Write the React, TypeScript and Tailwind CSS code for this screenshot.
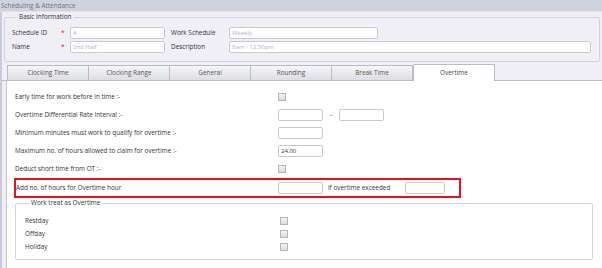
import React from "react";

const tabs = ["Clocking Time", "Clocking Range", "General", "Rounding", "Break Time", "Overtime"];

function Box({ w, value, placeholder }: { w: string; value?: string; placeholder?: string }) {
  return (
    <input
      readOnly
      value={value ?? ""}
      placeholder={placeholder}
      className={`${w} h-[12px] shrink-0 border border-[#c9c9cf] rounded-[2px] bg-white px-[2px] text-[6px] text-[#333] outline-none placeholder:text-[#b4b4bc]`}
    />
  );
}

function Check() {
  return (
    <span className="block w-[8px] h-[8px] shrink-0 border border-[#b4b4ba] bg-gradient-to-b from-[#f4f4f6] to-[#dcdce0]" />
  );
}

export default function App() {
  // rows under the Overtime tab
  const rows: { label: string; right: React.ReactNode }[] = [
    { label: "Early time for work before in time :-", right: <Check /> },
    {
      label: "Overtime Differential Rate Interval :-",
      right: (
        <div className="flex items-center">
          <Box w="w-[45px]" />
          <span className="w-[16px] text-center">-</span>
          <Box w="w-[45px]" />
        </div>
      ),
    },
    { label: "Minimum minutes must work to qualify for overtime :-", right: <Box w="w-[45px]" /> },
    { label: "Maximum no. of hours allowed to claim for overtime :-", right: <Box w="w-[45px]" value="24.00" /> },
    { label: "Deduct short time from OT :-", right: <Check /> },
  ];

  return (
    <div className="w-[602px] h-[268px] overflow-hidden bg-[#efeff5] font-['Open_Sans',sans-serif] text-[6.4px] text-[#333] flex flex-col">
      {/* title bar */}
      <div className="h-[12px] shrink-0 bg-[#ced3de] border-b border-[#dfe0e8] pl-[1px] leading-[11px] text-[#6f7184]">
        Scheduling &amp; Attendance
      </div>

      <div className="flex-1 flex flex-col border-l-2 border-[#c9cadb] min-h-0">
        {/* basic info */}
        <fieldset className="mx-[2px] mt-[1px] border border-[#d2d2db] rounded-[2px] pl-[7px] pt-[6px] pb-[8px]">
          <legend className="ml-[5px] px-[2px] leading-[8px] text-[#333]">Basic Information</legend>
          <div className="flex flex-col gap-[2px]">
            <div className="flex items-center h-[12px]">
              <span className="w-[49px]">Schedule ID</span>
              <span className="w-[9px] text-[#e0202a]">*</span>
              <Box w="w-[95px]" placeholder="4" />
              <span className="w-[58px] ml-[6px]">Work Schedule</span>
              <Box w="w-[149px]" placeholder="Weekly" />
            </div>
            <div className="flex items-center h-[12px]">
              <span className="w-[49px]">Name</span>
              <span className="w-[9px] text-[#e0202a]">*</span>
              <Box w="w-[95px]" placeholder="2nd Half" />
              <span className="w-[58px] ml-[6px]">Description</span>
              <Box w="w-[362px]" placeholder="8am - 12:30pm" />
            </div>
          </div>
        </fieldset>

        {/* tabs */}
        <div className="mt-[3px] h-[16px] shrink-0 flex items-end pl-[5px] border-b border-[#b9bcc6]">
          {tabs.map((t, i) =>
            t === "Overtime" ? (
              <div
                key={t}
                className="relative z-10 -mb-px w-[82px] h-[17px] flex items-center justify-center bg-white border border-b-0 border-[#b9bcc6] rounded-t-[2px] text-[#444]"
              >
                {t}
              </div>
            ) : (
              <div
                key={t}
                className={`h-[15px] flex items-center justify-center border border-b-0 border-[#b9bcc6] bg-gradient-to-b from-[#f6f6f8] to-[#dcdee4] text-[#555] ${i > 0 ? "border-l-0 w-[81px]" : "w-[82px]"}`}
              >
                {t}
              </div>
            )
          )}
        </div>

        {/* tab panel */}
        <div className="flex-1 ml-[4px] bg-white border-l border-[#c4c5cd] pt-[7px]">
          {rows.map((r) => (
            <div key={r.label} className="flex items-center h-[18px] pl-[8px]">
              <span className="w-[263px] shrink-0">{r.label}</span>
              {r.right}
            </div>
          ))}

          <div className="ml-[7px] w-[447px] h-[20px] border-2 border-[#e8101a] flex items-center">
            <span className="w-[262px] shrink-0">Add no. of hours for Overtime hour</span>
            <Box w="w-[45px]" />
            <span className="ml-[5px] w-[77px]">if overtime exceeded</span>
            <Box w="w-[40px]" />
          </div>

          <fieldset className="ml-[8px] mt-[1px] w-[578px] border border-[#d4d4da] rounded-[2px] pl-[9px] pt-[7px] pb-[6px]">
            <legend className="ml-[4px] px-[2px] leading-[8px]">Work treat as Overtime</legend>
            {["Restday", "Offday", "Holiday"].map((d) => (
              <div key={d} className="flex items-center h-[13px]">
                <span className="w-[255px] shrink-0">{d}</span>
                <Check />
              </div>
            ))}
          </fieldset>
        </div>
      </div>
    </div>
  );
}
